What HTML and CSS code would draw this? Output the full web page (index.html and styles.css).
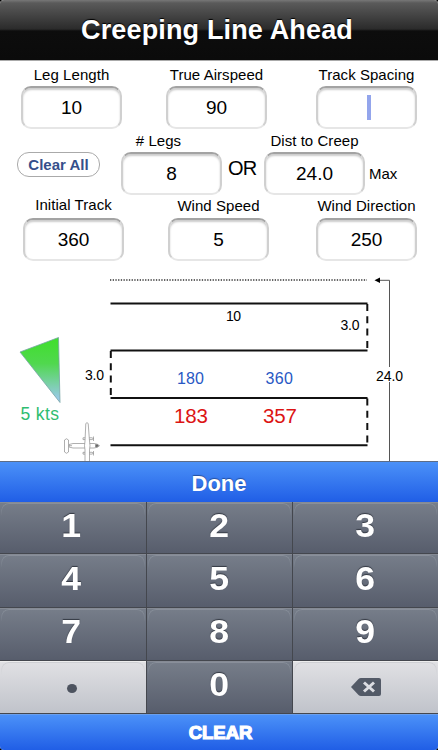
FILE: index.html
```html
<!DOCTYPE html>
<html lang="en">
  <head>
    <meta charset="UTF-8" />
    <meta name="viewport" content="width=device-width, initial-scale=1.0" />
    <title>Creeping Line Ahead</title>
    <link rel="stylesheet" href="styles.css">
  </head>
  <body>
    <div class="app">
      <header class="navbar">
        <h1>Creeping Line Ahead</h1>
      </header>

      <form class="form">
        <div class="row row-top">
          <div class="field">
            <label for="leg">Leg Length</label>
            <input type="text" id="leg" value="10" />
          </div>
          <div class="field field-center">
            <label for="airspeed">True Airspeed</label>
            <input type="text" id="airspeed" value="90" />
          </div>
          <div class="field">
            <label for="spacing">Track Spacing</label>
            <div class="input" id="spacing"><span class="caret"></span></div>
          </div>
        </div>

        <div class="row row-middle">
          <button type="button" class="clear-all">Clear All</button>
          <div class="field field-legs">
            <label for="legs"># Legs</label>
            <input type="text" id="legs" value="8" />
          </div>
          <span class="or">OR</span>
          <div class="field">
            <label for="creep">Dist to Creep</label>
            <input type="text" id="creep" value="24.0" />
          </div>
          <span class="max">Max</span>
        </div>

        <div class="row row-bottom">
          <div class="field field-track">
            <label for="track">Initial Track</label>
            <input type="text" id="track" value="360" />
          </div>
          <div class="field field-wind">
            <label for="wind">Wind Speed</label>
            <input type="text" id="wind" value="5" />
          </div>
          <div class="field">
            <label for="direction">Wind Direction</label>
            <input type="text" id="direction" value="250" />
          </div>
        </div>
      </form>

      <svg class="diagram" width="438" height="200" viewBox="0 261 438 200">
        <defs>
          <linearGradient id="windFill" x1="0" y1="0" x2="0" y2="1">
            <stop offset="0" stop-color="#3fdf2b" />
            <stop offset="0.4" stop-color="#50d84e" />
            <stop offset="1" stop-color="#a0c8f8" />
          </linearGradient>
        </defs>

        <!-- search legs -->
        <path class="dots" d="M110 280H367" />
        <path class="leg" d="M110.500 303.500H367.500M110.500 350.500H367.500M110.500 398H367.500M110.500 445.300H367.500" />
        <path class="turn" d="M367.300 304V350M367.300 398.500V445M110.800 351V397" />

        <!-- total creep distance -->
        <path class="measure" d="M379 280.300H389.500V367M389.500 382V461" />
        <path d="M374.500 280.300L380 277.500V283Z" />

        <text x="226" y="320.500" class="small" textLength="15">10</text>
        <text x="340.500" y="330" class="small" textLength="19">3.0</text>
        <text x="85" y="379.500" class="small" textLength="19">3.0</text>
        <text x="376" y="381" class="small" textLength="27">24.0</text>
        <text x="177" y="384" class="blue" textLength="27">180</text>
        <text x="265.500" y="384" class="blue" textLength="27.500">360</text>
        <text x="174" y="423" class="red" textLength="34">183</text>
        <text x="263" y="423" class="red" textLength="34">357</text>

        <!-- wind arrow -->
        <path d="M20 352L58.500 337.500L60 402.500Z" fill="url(#windFill)" stroke="#76a5a4" stroke-width="0.8" />
        <text x="20.500" y="419.500" class="wind" textLength="38.500">5 kts</text>

        <!-- plane -->
        <g class="plane">
          <path d="M69 444.500L73 443.500H94Q97.500 443.700 99.500 445.700Q97.500 447.800 94 448H73L69 447Z" />
          <path d="M64.500 440Q66.500 437.500 68.500 440V452Q66.500 454.500 64.500 452Z" />
          <path d="M83 437.800H92L93.500 438.700L92 439.600H83ZM83 452.300H92L93.500 453.200L92 454.100H83ZM93.500 436.500V441M93.500 451V455.500" />
          <path d="M85.800 423.500Q87 421.800 88.200 423.500L89.500 441L90 445.700L89.500 450V462H85V450L84.500 445.700L85 441Z" />
          <path class="nose" d="M95.500 444.500H97.500L98.500 445.700L97.500 447H95.500Z" />
          <path d="M69 445.700H72" />
        </g>
      </svg>

      <div class="keyboard">
        <button class="bar done">Done</button>
        <div class="keys">
          <button class="key"><span>1</span></button>
          <button class="key"><span>2</span></button>
          <button class="key"><span>3</span></button>
          <button class="key"><span>4</span></button>
          <button class="key"><span>5</span></button>
          <button class="key"><span>6</span></button>
          <button class="key"><span>7</span></button>
          <button class="key"><span>8</span></button>
          <button class="key"><span>9</span></button>
          <button class="key light"><i class="point"></i></button>
          <button class="key"><span>0</span></button>
          <button class="key light">
            <svg width="30" height="18" viewBox="0 0 30 18">
              <path d="M0 9L7.500 1Q8.500 0 10 0H28Q30 0 30 2V16Q30 18 28 18H10Q8.500 18 7.500 17Z" fill="#535a67" />
              <path d="M13 4.500L23 13.500M23 4.500L13 13.500" stroke="#dcdde2" stroke-width="3" />
            </svg>
          </button>
        </div>
        <button class="bar clear">CLEAR</button>
      </div>
    </div>
  </body>
</html>
```

FILE: styles.css
```css
* {
  box-sizing: border-box;
}
body {
  margin: 0;
  background-color: #000;
  font-family: "Liberation Sans", Arial, sans-serif;
}
button {
  font-family: inherit;
  border: none;
  padding: 0;
}
.app {
  width: 438px;
  height: 750px;
  display: flex;
  flex-direction: column;
  background-color: #fff;
  border-radius: 4px;
  overflow: hidden;
}

/* title bar */
.navbar {
  height: 61px;
  flex: none;
  background: linear-gradient(#777 0, #5a5a5a 3px, #2b2b2b 29px, #0d0d0d 31px, #0b0b0b 60px, #aaa 60px);
}
h1 {
  margin: 0;
  color: #fff;
  font-size: 27px;
  line-height: 60px;
  letter-spacing: 0.15px;
  text-align: center;
  text-indent: -4px;
  text-shadow: 0 -1px 1px #000;
}

/* inputs */
.form {
  height: 200px;
  flex: none;
  padding-top: 3px;
}
.row {
  display: flex;
  height: 66px;
}
.row-top {
  padding: 0 21px;
  justify-content: space-between;
}
.row-middle {
  padding-left: 17px;
}
.row-bottom {
  padding: 0 21px 0 23px;
  justify-content: space-between;
}
.field {
  width: 101px;
  display: flex;
  flex-direction: column;
}
.field-center {
  margin-right: 5px;
}
.field-wind {
  margin-right: 3px;
}
.field label {
  height: 21px;
  font-size: 15px;
  line-height: 22px;
  letter-spacing: 0.05px;
  text-align: center;
  white-space: nowrap;
}
.row-bottom label {
  line-height: 20px;
}
.field-track label {
  line-height: 18px;
}
.field input,
.input {
  width: 101px;
  height: 43px;
  margin-top: 1px;
  padding: 0;
  border: 2px solid #d0d0d0;
  border-top-color: #a3a3a3;
  border-bottom-color: #e6e6e6;
  border-radius: 10px;
  background-color: #fff;
  box-shadow: inset 0 2px 2px #ccc;
  font-family: inherit;
  font-size: 19px;
  text-align: center;
  color: #000;
}
.input {
  display: flex;
  align-items: center;
  justify-content: center;
}
.caret {
  width: 4px;
  height: 25px;
  margin: 0 0 1px 4px;
  background-color: #93a5ec;
}
.clear-all {
  width: 83px;
  height: 25px;
  margin-top: 22px;
  padding-bottom: 1px;
  border: 1.500px solid #aaa;
  border-radius: 12px;
  background-color: #fff;
  color: #354f8b;
  font-size: 15px;
  font-weight: bold;
}
.field-legs {
  margin-left: 21px;
}
.field-legs label {
  padding-right: 26px;
}
.or {
  width: 42px;
  padding: 26px 0 0 6px;
  font-size: 20px;
  line-height: 24px;
  letter-spacing: -0.7px;
}
.max {
  padding: 35px 0 0 4px;
  font-size: 15px;
}

/* pattern diagram */
.diagram {
  display: block;
  flex: none;
}
.diagram path {
  stroke-linejoin: round;
}
.leg {
  stroke: #111;
  stroke-width: 1.900;
}
.turn {
  stroke: #111;
  stroke-width: 2;
  stroke-dasharray: 7 5.300;
}
.dots {
  stroke: #333;
  stroke-width: 1.500;
  stroke-dasharray: 1.300 1.400;
}
.measure {
  fill: none;
  stroke: #555;
  stroke-width: 1;
}
.small {
  font-size: 14px;
}
.blue {
  font-size: 16px;
  fill: #2858c4;
}
.red {
  font-size: 20.500px;
  fill: #dc1414;
}
.wind {
  font-size: 17.500px;
  fill: #2fbd70;
}
.plane path {
  fill: #fff;
  stroke: #8c8c8c;
  stroke-width: 0.7;
}
.plane .nose {
  fill: #666;
}

/* number pad */
.keyboard {
  height: 289px;
  flex: none;
}
.bar {
  display: block;
  width: 438px;
  color: #fff;
  font-weight: bold;
  background: linear-gradient(#4b91f8, #205ee6);
}
.done {
  height: 41px;
  padding-top: 4px;
  border-top: 1px solid #5d6d86;
  font-size: 22px;
  text-shadow: 0 -1px 1px #264f9c;
}
.keys {
  display: grid;
  grid-template-columns: 147px 146px 145px;
  grid-template-rows: 52px 54px 53px 53px;
}
.key {
  position: relative;
  display: flex;
  align-items: center;
  justify-content: center;
  background: linear-gradient(#777e8a, #575d6c);
  border-right: 1px solid #44474e;
  border-bottom: 1px solid #44474e;
  box-shadow: inset 0 1px 0 #858a94;
  color: #fff;
  font-size: 33px;
  font-weight: bold;
  text-shadow: 0 -1px 1px #333842;
}
.key::before {
  content: "";
  position: absolute;
  inset: 1px 1px auto 1px;
  height: 12px;
  border: 1px solid #89909b;
  border-width: 1px 1px 0;
  border-radius: 8px 8px 0 0;
  -webkit-mask-image: linear-gradient(#000, transparent);
  mask-image: linear-gradient(#000, transparent);
}
.key:nth-child(3n) {
  border-right: none;
}
.key span {
  transform: scaleX(1.080);
  line-height: 38px;
  margin-top: -4px;
}
.key:nth-child(3n + 1) span {
  margin-right: 3px;
}
.light {
  background: linear-gradient(#e1e1e4, #c0c3ca);
  box-shadow: inset 0 1px 0 #eee;
}
.light::before {
  border-color: #cdced2;
}
.point {
  width: 10px;
  height: 9px;
  margin: 3px 2px 0 0;
  border-radius: 50%;
  background-color: #4d535f;
}
.clear {
  height: 36px;
  padding-left: 3px;
  border-top: 1px solid #6b9fec;
  font-size: 18.500px;
  -webkit-text-stroke: 1.200px #fff;
}
```
